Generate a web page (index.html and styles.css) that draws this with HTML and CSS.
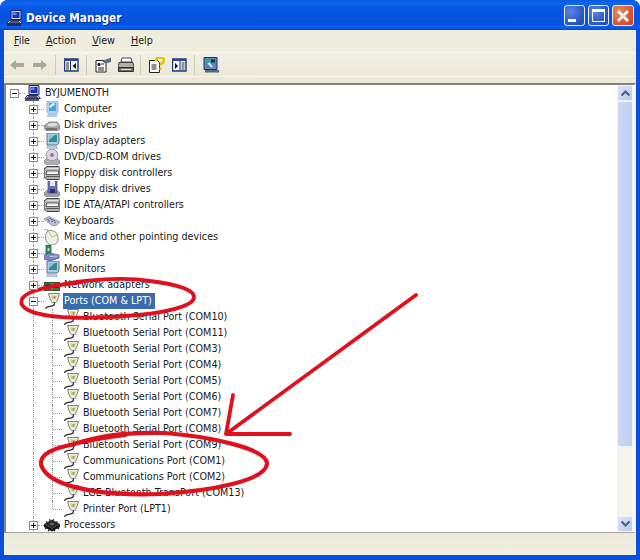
FILE: index.html
```html
<!DOCTYPE html>
<html lang="en">
<head>
<meta charset="utf-8">
<title>Device Manager</title>
<link rel="stylesheet" href="styles.css">
</head>
<body>
<svg class="defs" width="0" height="0" aria-hidden="true">
  <defs>
    <symbol id="i-host" viewBox="0 0 16 16"><path d="M4 .5h10v9H4z" fill="#c6cde0" stroke="#1e2768"/><path d="M5.500 2h7v6h-7z" fill="#1a35b0"/><path d="M6 2.500h3.500v2.500H6z" fill="#5f86e8"/><path d="M2 10.500h11l2.500 3H0z" fill="#d8d8de" stroke="#2b3160"/><path d="M2 12.500h11M3 11.500h9" stroke="#50557a"/><path d="M0 15h14" stroke="#222" stroke-width="1.500"/></symbol>
    <symbol id="i-comp" viewBox="0 0 16 16"><path d="M3 0h10l1 1v10l-2 3H5l-2-3z" fill="#a7d0ef" stroke="#a9bccc"/><path d="M5 2h7v8H5z" fill="#4aa0e6"/><path d="M5.500 6l5-3.500" stroke="#d5ecfb" stroke-width="2.500"/><path d="M3 14h10v2H3z" fill="#bcc6d4"/></symbol>
    <symbol id="i-disk" viewBox="0 0 16 16"><path d="M0 9l5-4h8l3 4v3l-3 1.500H2L0 11z" fill="#a4a5a6" stroke="#6e7074" stroke-width=".7"/><path d="M3 8l3-2h6l2 2-3 1.500H5z" fill="#dcdcde"/><path d="M2 12h11" stroke="#444" stroke-width="1.200"/></symbol>
    <symbol id="i-disp" viewBox="0 0 16 16"><path d="M3 0h12v10l-2 2H3z" fill="#b3cbe2" stroke="#4f7390"/><path d="M5 2h8v7H5z" fill="#2f8f8e"/><path d="M5 2h6L5 7z" fill="#79cde2"/><path d="M3 13h10v3H3z" fill="#bcd5ea" stroke="#8ba3b6" stroke-width=".6"/></symbol>
    <symbol id="i-dvd" viewBox="0 0 16 16"><path d="M0 12l3-3h10l3 3v2l-2 1.500H2L0 14z" fill="#adaeb3" stroke="#7f8187" stroke-width=".6"/><circle cx="8" cy="6" r="5.800" fill="#dcd7e4" stroke="#9a9aae"/><circle cx="8" cy="6" r="1.900" fill="#7f7c9c"/></symbol>
    <symbol id="i-ctrl" viewBox="0 0 16 16"><path d="M3 1.500h12l1 1v11l-1 1H3l-3-2.500V4z" fill="#b4b6b6" stroke="#3e4041"/><path d="M2.500 6h12v3.500h-12z" fill="#f4f4f2" stroke="#444546" stroke-width=".8"/><path d="M2 11.500h13" stroke="#55575a" stroke-width="1.200"/><path d="M3 3.500h11" stroke="#e6e6e6"/></symbol>
    <symbol id="i-flop" viewBox="0 0 16 16"><path d="M0 12l3-3h10l3 3v2l-2 1.500H2L0 14z" fill="#a0a1a6" stroke="#73757b" stroke-width=".6"/><path d="M4 0h9v12H4z" fill="#6670b2" stroke="#3f478c" stroke-width=".7"/><path d="M6 0h5v5H6z" fill="#e3e6f3"/><path d="M6 8h5v4H6z" fill="#28326f"/></symbol>
    <symbol id="i-key" viewBox="0 0 16 16"><path d="M0 6l5-2.500L16 9l-4 3.500H8z" fill="#bcc2de" stroke="#8287ab" stroke-width=".8"/><path d="M3 6l2 1M5 5l2 1M7 6l2 1M9 7l2 1M4 7.500l2 1M7 8l2 1M10 9l2 1" stroke="#5f6488"/></symbol>
    <symbol id="i-mouse" viewBox="0 0 16 16"><path d="M4 2c4-1.500 9 0 10 6 .8 5-2 8-6 8-4.500 0-6.500-3.500-6.500-8 0-2.500 1-5 2.500-6z" fill="#f0f1e6" stroke="#8f917f"/><path d="M5 3l3 5 5-2" fill="none" stroke="#b8baaa"/><path d="M0 0c2 0 4 .5 4 2.500" fill="none" stroke="#808080"/></symbol>
    <symbol id="i-modem" viewBox="0 0 16 16"><path d="M2 0h5v10H2z" fill="#2f8a53" stroke="#1a5233" stroke-width=".7"/><path d="M0 10l5-2 10 2v3l-9 3-6-2z" fill="#7788c4" stroke="#3f4a88" stroke-width=".7"/><path d="M6 11.500l8-.5" stroke="#c4cdf0"/><path d="M3.500 3h2v3h-2z" fill="#b8d8b8"/></symbol>
    <symbol id="i-net" viewBox="0 0 16 16"><path d="M0 5.500h16v8H0z" fill="#3a7a3e" stroke="#1a381d" stroke-width=".8"/><path d="M2 7.500h4.500v4H2zM9 7.500h5v3.500H9z" fill="#111"/><path d="M7.500 6.500h1v6h-1z" fill="#b2cc52"/></symbol>
    <symbol id="i-port" viewBox="0 0 16 16"><path d="M4.500.5h11l-2 6.500-1.500 2.500H8.500L6.500 7z" fill="#f2f2dc" stroke="#808079"/><path d="M7 2.500h6l-1.300 4H8.300z" fill="#cfce88"/><path d="M9.500 3.500h2l-.5 2h-1z" fill="#8c8b48"/><path d="M10.500 9.500c0 3.500-1.500 3.200-4.500 3.800C3.500 13.800 2 14 1.500 15.800" fill="none" stroke="#2f2f2f" stroke-width="1.300"/></symbol>
    <symbol id="i-chip" viewBox="0 0 16 16"><path d="M0 7l8-4.500L16 7l-8 4.500z" fill="#2a2a2a"/><path d="M0 7v3l8 4.500 8-4.500V7l-8 4.500z" fill="#111"/><path d="M2 4.500l1.500 1M5 2.500l1.500 1M10 2.500l-1 1M13.500 4.500l-1.500 1M1 12l1.500-1M4 14l1.500-1.500M11 14l-1.500-1.500M15 12l-1.500-1" stroke="#222" stroke-width="1.200"/><path d="M5 7l3-1.500L11 7 8 8.500z" fill="#666"/></symbol>
  </defs>
</svg>
<div class="window">
  <header class="titlebar">
    <svg class="title-icon" width="16" height="16"><use href="#i-host"/></svg>
    <h1 class="title">Device Manager</h1>
    <div class="controls">
      <button class="wbtn"><span class="g-min"></span></button>
      <button class="wbtn"><span class="g-max"></span></button>
      <button class="wbtn close"><svg width="14" height="14" viewBox="0 0 14 14"><path d="M2 2l10 10M12 2L2 12" stroke="#fff" stroke-width="2.600"/></svg></button>
    </div>
  </header>
  <div class="inner">
    <nav class="menubar">
      <span class="menu"><u>F</u>ile</span>
      <span class="menu"><u>A</u>ction</span>
      <span class="menu"><u>V</u>iew</span>
      <span class="menu"><u>H</u>elp</span>
    </nav>
    <div class="toolbar">
      <svg class="tool" width="16" height="16" viewBox="0 0 16 16"><path d="M0 8l6-5v3h8v4H6v3z" fill="#a9a99d"/></svg>
      <svg class="tool" width="16" height="16" viewBox="0 0 16 16"><path d="M14 8L8 3v3H0v4h8v3z" fill="#a9a99d"/></svg>
      <span class="sep"></span>
      <svg class="tool" width="16" height="16" viewBox="0 0 16 16"><path d="M.5 2h13.500v12H.5z" fill="#f2f4f8" stroke="#1f3a78" stroke-width="1.400"/><path d="M.5 2h13.500v2H.5z" fill="#2a4a92"/><path d="M6.500 4v10" stroke="#1f3a78"/><path d="M2 6h3M2 8h3M2 10h3M2 12h3" stroke="#333"/><path d="M12 6v6L8.500 9z" fill="#111"/></svg>
      <span class="sep"></span>
      <svg class="tool" width="16" height="16" viewBox="0 0 16 16"><path d="M1 3.500h9l1 1.500v10H1z" fill="#fff" stroke="#222"/><path d="M3 6.500h2v2H3zM6 7h3M3 11h6M3 13h6" stroke="#222"/><path d="M7 4l9-3.500V5l-6 1.500z" fill="#5f6e8a"/></svg>
      <svg class="tool" width="16" height="16" viewBox="0 0 16 16"><path d="M4 1h9l1 4H3z" fill="#fff" stroke="#444"/><path d="M1 5.500h14l1 5H0z" fill="#b0b1a4" stroke="#3f3f3f"/><path d="M.5 10.500h15v4H.5z" fill="#6f726a" stroke="#2e2e2e"/><path d="M3 12.500h10" stroke="#ddd"/></svg>
      <span class="sep"></span>
      <svg class="tool" width="16" height="16" viewBox="0 0 16 16"><path d="M.5 3.500h8l2 2v10H.5z" fill="#fff" stroke="#222"/><path d="M2.500 8h5M2.500 10h5M2.500 12h5" stroke="#222"/><path d="M6.500 4.500c0-5 8.500-5.300 8.500-1 0 3-3.500 2-3.500 5" fill="none" stroke="#e8c400" stroke-width="2.600"/><path d="M10.300 10.500h2.400v2.500h-2.400z" fill="#e8c400"/></svg>
      <svg class="tool" width="16" height="16" viewBox="0 0 16 16"><path d="M.5 2h13.500v12H.5z" fill="#f2f4f8" stroke="#1f3a78" stroke-width="1.400"/><path d="M.5 2h13.500v2H.5z" fill="#2a4a92"/><path d="M8 4v10" stroke="#1f3a78"/><path d="M9.500 6h3M9.500 8h3M9.500 10h3M9.500 12h3" stroke="#333"/><path d="M3 6v6l3-3z" fill="#111"/></svg>
      <span class="sep"></span>
      <svg class="tool" width="16" height="16" viewBox="0 0 16 16"><path d="M1 .5h13v12H1z" fill="#5d86b4" stroke="#1e3560"/><path d="M3 3l6 7" stroke="#d7e6f4" stroke-width="2"/><circle cx="4" cy="4" r="2.400" fill="#2fa6a0"/><path d="M8 2.500h4v3H8z" fill="#16305e"/><path d="M2 13h14v2.500H2z" fill="#5f6672"/></svg>
    </div>
    <div class="content">
      <div class="tree">
        <div class="row"><span class="cell"><span class="box minus"></span><span class="stub"></span></span><svg class="icon"><use href="#i-host"/></svg><span class="label">BYJUMENOTH</span></div>

        <div class="row"><span class="cell"></span><span class="cell v"><span class="box plus"></span><span class="stub"></span></span><svg class="icon"><use href="#i-comp"/></svg><span class="label">Computer</span></div>
        <div class="row"><span class="cell"></span><span class="cell v"><span class="box plus"></span><span class="stub"></span></span><svg class="icon"><use href="#i-disk"/></svg><span class="label">Disk drives</span></div>
        <div class="row"><span class="cell"></span><span class="cell v"><span class="box plus"></span><span class="stub"></span></span><svg class="icon"><use href="#i-disp"/></svg><span class="label">Display adapters</span></div>
        <div class="row"><span class="cell"></span><span class="cell v"><span class="box plus"></span><span class="stub"></span></span><svg class="icon"><use href="#i-dvd"/></svg><span class="label">DVD/CD-ROM drives</span></div>
        <div class="row"><span class="cell"></span><span class="cell v"><span class="box plus"></span><span class="stub"></span></span><svg class="icon"><use href="#i-ctrl"/></svg><span class="label">Floppy disk controllers</span></div>
        <div class="row"><span class="cell"></span><span class="cell v"><span class="box plus"></span><span class="stub"></span></span><svg class="icon"><use href="#i-flop"/></svg><span class="label">Floppy disk drives</span></div>
        <div class="row"><span class="cell"></span><span class="cell v"><span class="box plus"></span><span class="stub"></span></span><svg class="icon"><use href="#i-ctrl"/></svg><span class="label">IDE ATA/ATAPI controllers</span></div>
        <div class="row"><span class="cell"></span><span class="cell v"><span class="box plus"></span><span class="stub"></span></span><svg class="icon"><use href="#i-key"/></svg><span class="label">Keyboards</span></div>
        <div class="row"><span class="cell"></span><span class="cell v"><span class="box plus"></span><span class="stub"></span></span><svg class="icon"><use href="#i-mouse"/></svg><span class="label">Mice and other pointing devices</span></div>
        <div class="row"><span class="cell"></span><span class="cell v"><span class="box plus"></span><span class="stub"></span></span><svg class="icon"><use href="#i-modem"/></svg><span class="label">Modems</span></div>
        <div class="row"><span class="cell"></span><span class="cell v"><span class="box plus"></span><span class="stub"></span></span><svg class="icon"><use href="#i-disp"/></svg><span class="label">Monitors</span></div>
        <div class="row"><span class="cell"></span><span class="cell v"><span class="box plus"></span><span class="stub"></span></span><svg class="icon"><use href="#i-net"/></svg><span class="label">Network adapters</span></div>
        <div class="row"><span class="cell"></span><span class="cell v"><span class="box minus"></span><span class="stub"></span></span><svg class="icon"><use href="#i-port"/></svg><span class="label selected">Ports (COM &amp; LPT)</span></div>

        <div class="row"><span class="cell"></span><span class="cell v"></span><span class="cell tee"></span><svg class="icon"><use href="#i-port"/></svg><span class="label">Bluetooth Serial Port (COM10)</span></div>
        <div class="row"><span class="cell"></span><span class="cell v"></span><span class="cell tee"></span><svg class="icon"><use href="#i-port"/></svg><span class="label">Bluetooth Serial Port (COM11)</span></div>
        <div class="row"><span class="cell"></span><span class="cell v"></span><span class="cell tee"></span><svg class="icon"><use href="#i-port"/></svg><span class="label">Bluetooth Serial Port (COM3)</span></div>
        <div class="row"><span class="cell"></span><span class="cell v"></span><span class="cell tee"></span><svg class="icon"><use href="#i-port"/></svg><span class="label">Bluetooth Serial Port (COM4)</span></div>
        <div class="row"><span class="cell"></span><span class="cell v"></span><span class="cell tee"></span><svg class="icon"><use href="#i-port"/></svg><span class="label">Bluetooth Serial Port (COM5)</span></div>
        <div class="row"><span class="cell"></span><span class="cell v"></span><span class="cell tee"></span><svg class="icon"><use href="#i-port"/></svg><span class="label">Bluetooth Serial Port (COM6)</span></div>
        <div class="row"><span class="cell"></span><span class="cell v"></span><span class="cell tee"></span><svg class="icon"><use href="#i-port"/></svg><span class="label">Bluetooth Serial Port (COM7)</span></div>
        <div class="row"><span class="cell"></span><span class="cell v"></span><span class="cell tee"></span><svg class="icon"><use href="#i-port"/></svg><span class="label">Bluetooth Serial Port (COM8)</span></div>
        <div class="row"><span class="cell"></span><span class="cell v"></span><span class="cell tee"></span><svg class="icon"><use href="#i-port"/></svg><span class="label">Bluetooth Serial Port (COM9)</span></div>
        <div class="row"><span class="cell"></span><span class="cell v"></span><span class="cell tee"></span><svg class="icon"><use href="#i-port"/></svg><span class="label">Communications Port (COM1)</span></div>
        <div class="row"><span class="cell"></span><span class="cell v"></span><span class="cell tee"></span><svg class="icon"><use href="#i-port"/></svg><span class="label">Communications Port (COM2)</span></div>
        <div class="row"><span class="cell"></span><span class="cell v"></span><span class="cell tee"></span><svg class="icon"><use href="#i-port"/></svg><span class="label">LGE Bluetooth TransPort (COM13)</span></div>
        <div class="row"><span class="cell"></span><span class="cell v"></span><span class="cell ell"></span><svg class="icon"><use href="#i-port"/></svg><span class="label">Printer Port (LPT1)</span></div>

        <div class="row"><span class="cell"></span><span class="cell v"><span class="box plus"></span><span class="stub"></span></span><svg class="icon"><use href="#i-chip"/></svg><span class="label">Processors</span></div>
      </div>
      <div class="scrollbar">
        <div class="sbtn"><svg width="11" height="8" viewBox="0 0 11 8"><path d="M1.500 6.500l4-4 4 4" fill="none" stroke="#4d6185" stroke-width="2.200"/></svg></div>
        <div class="thumb"></div>
        <div class="track"></div>
        <div class="sbtn"><svg width="11" height="8" viewBox="0 0 11 8"><path d="M1.500 1.500l4 4 4-4" fill="none" stroke="#4d6185" stroke-width="2.200"/></svg></div>
      </div>
    </div>
    <div class="statusbar"></div>
  </div>
</div>
<svg class="ink" width="640" height="560" viewBox="0 0 640 560" aria-hidden="true">
  <g fill="none" stroke="#e0101e" stroke-linecap="round" stroke-linejoin="round">
    <path stroke-width="3.800" d="M55 286C85 279 125 277 150 281C180 285 195 290 194 298C192 307 160 314 125 316C90 319 45 319 28 310C17 304 20 296 34 291C46 287 62 284 82 282"/>
    <path stroke-width="4.200" d="M74 444C100 435 135 432 165 433C205 436 268 448 267 464C265 481 210 491 160 494C115 496 62 490 46 473C35 461 43 452 62 447C80 442 100 438 125 435"/>
    <path stroke-width="3.800" d="M416 295L226 434M233 395L226 434L290 434"/>
  </g>
</svg>
</body>
</html>
```
FILE: styles.css
```css
* { box-sizing: border-box; }
html, body { margin: 0; padding: 0; background: #fff; }
body {
  width: 640px;
  height: 560px;
  overflow: hidden;
  position: relative;
  font-family: "DejaVu Sans", "Liberation Sans", sans-serif;
  font-stretch: condensed;
  font-size: 10.700px;
  color: #1a1a1a;
}
.defs { position: absolute; }
.window {
  width: 640px;
  height: 560px;
  display: flex;
  flex-direction: column;
  background: #0a4fdc;
  border-radius: 8px 8px 0 0;
  overflow: hidden;
}
.titlebar {
  height: 30px;
  flex: none;
  display: flex;
  align-items: center;
  padding: 5px 6px 0 7px;
  background: linear-gradient(#0a58d8 0, #0b66f0 3px, #0757e4 8px, #0552de 22px, #0a5ff0 27px, #0448c8 30px);
}
.title-icon { width: 16px; height: 16px; margin-right: 3px; }
.title {
  margin: 0;
  font-size: 11.700px;
  font-weight: 700;
  color: #fff;
  text-shadow: 1px 1px 1px #0a2a90;
  flex: 1;
}
.controls { display: flex; gap: 3px; margin-top: -4px; }
.wbtn {
  width: 21px;
  height: 21px;
  padding: 0;
  border: 1px solid #e8eefc;
  border-radius: 3px;
  background: radial-gradient(circle at 30% 30%, #5a82e6, #2a53c4 70%, #2144ad);
  display: flex;
  align-items: center;
  justify-content: center;
  position: relative;
}
.wbtn.close { background: radial-gradient(circle at 30% 30%, #ea8a5c, #d4532d 70%, #bd3d1e); width: 22px; }
.g-min { width: 8px; height: 3px; background: #fff; margin: 9px 5px 0 0; }
.g-max { width: 13px; height: 13px; border: 1px solid #fff; border-top-width: 3px; }
.inner {
  flex: 1;
  margin: 0 4px 5px 4px;
  display: flex;
  flex-direction: column;
  background: #ece9d8;
  min-height: 0;
}
.menubar {
  height: 23px;
  flex: none;
  display: flex;
  align-items: center;
  padding: 0 0 1px 10px;
  gap: 16px;
  font-size: 10.700px;
  background: #efedde;
  border-bottom: 1px solid #f8f7ef;
}
.menu u { text-decoration: underline; }
.toolbar {
  height: 24px;
  flex: none;
  display: flex;
  align-items: center;
  padding: 0 0 0 2.500px;
  background: linear-gradient(#f2f0e4, #ebe8d8);
  border-bottom: 1px solid #f8f7ef;
}
.tool { width: 16px; height: 16px; flex: none; margin: 0 3.500px; }
.sep { width: 1px; height: 20px; background: #cfccba; margin: 0 4.500px 0 2.500px; flex: none; }
.content {
  margin-top: 6px;
  flex: 1;
  min-height: 0;
  display: flex;
  background: #fff;
  border-left: 2px solid #8c8a80;
  border-top: 2px solid #84827a;
  border-right: 2px solid #f5f3e8;
  border-bottom: 1px solid #aca899;
}
.tree { flex: 1; min-width: 0; overflow: hidden; }
.row { height: 16px; display: flex; align-items: center; white-space: nowrap; }
.cell { width: 19px; height: 16px; flex: none; position: relative; }
.cell:first-child { width: 19px; margin-left: -1px; }
.v::before, .tee::before, .ell::before {
  content: "";
  position: absolute;
  left: 9px;
  top: 0;
  bottom: 0;
  border-left: 1px dotted #9a9a94;
}
.ell::before { bottom: 8px; }
.tee::after, .ell::after, .stub {
  content: "";
  position: absolute;
  left: 10px;
  width: 9px;
  top: 8px;
  border-top: 1px dotted #9a9a94;
}
.stub { left: 14px; width: 6px; }
.box {
  position: absolute;
  left: 5px;
  top: 4px;
  width: 9px;
  height: 9px;
  background: #fff;
  border: 1px solid #8a8f96;
  z-index: 1;
}
.box::before {
  content: "";
  position: absolute;
  left: 1px;
  top: 3px;
  width: 5px;
  height: 1px;
  background: #111;
}
.plus::after {
  content: "";
  position: absolute;
  left: 3px;
  top: 1px;
  width: 1px;
  height: 5px;
  background: #111;
}
.icon { width: 16px; height: 16px; margin: 0 3px 0 1px; flex: none; }
.label { display: flex; align-items: center; height: 16px; padding: 0 1px 1px; line-height: 14px; }
.selected { background: #3a6cab; color: #fff; padding-right: 3px; }
.scrollbar {
  width: 16px;
  flex: none;
  margin-right: 1px;
  display: flex;
  flex-direction: column;
  background: #f6f5ec;
}
.sbtn {
  height: 16px;
  flex: none;
  background: linear-gradient(135deg, #dfe7fb, #b7c7ef);
  border: 1px solid #f0f3fb;
  border-radius: 2px;
  display: flex;
  align-items: center;
  justify-content: center;
}
.thumb {
  height: 346px;
  flex: none;
  background: linear-gradient(90deg, #cbd7f6, #c1cff3);
  border: 1px solid #eef1fa;
  border-radius: 2px;
}
.track { flex: 1; }
.statusbar {
  height: 22px;
  flex: none;
  background: linear-gradient(#ece9d8, #f1efe3);
}
.ink { position: absolute; left: 0; top: 0; pointer-events: none; }
```
